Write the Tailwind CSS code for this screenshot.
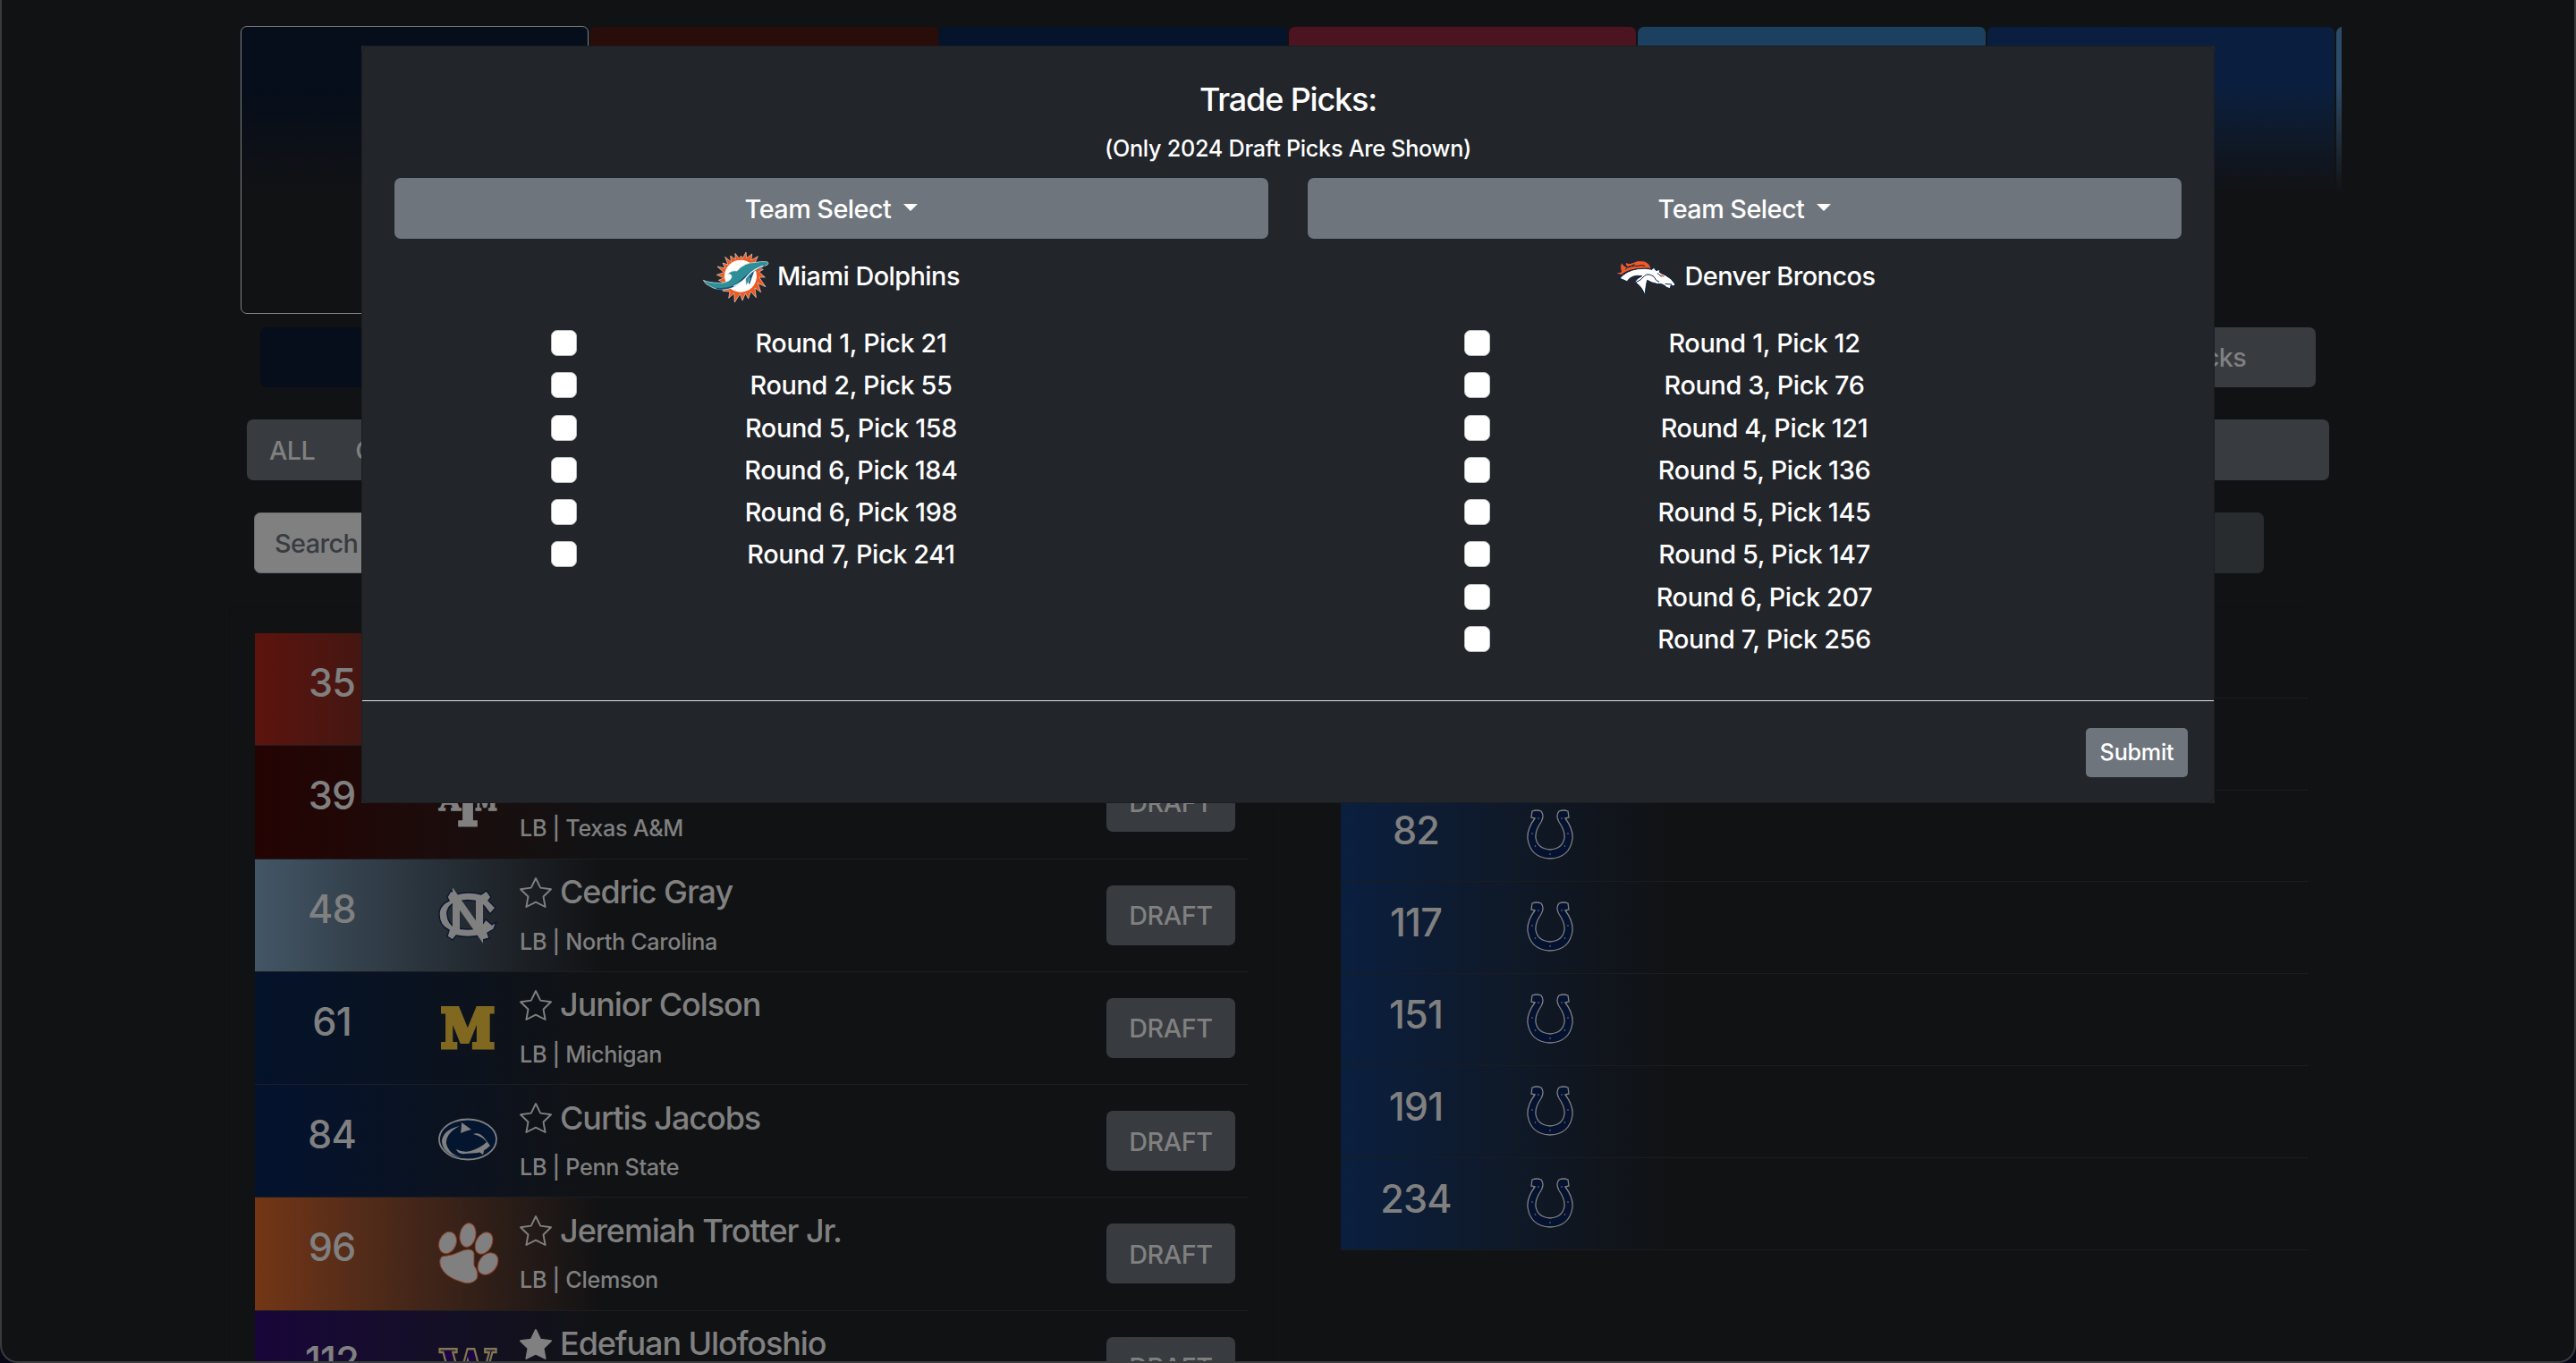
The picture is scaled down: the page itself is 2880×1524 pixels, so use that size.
<!DOCTYPE html>
<html lang="en">
<head>
<meta charset="utf-8">
<title>Mock Draft – Trade Picks</title>
<script src="https://cdn.jsdelivr.net/npm/@tailwindcss/browser@4"></script>
</head>
<body class="bg-[#070716] font-['Inter','Liberation_Sans',sans-serif] font-[450] text-[28.8px] leading-[43.2px]">
<div class="relative w-[2880px] h-[1524px] overflow-hidden">

  <!-- Draft room -->
  <main class="w-full h-full overflow-hidden rounded-b-[20px] bg-[#111214] pl-[256px] flex flex-col items-start text-[#808080]">
    <div class="mt-[29px] ml-[13px] w-[2349px] h-[322px] shrink-0 flex gap-[1.8px] overflow-hidden">
      <div class="w-[389.2px] shrink-0 rounded-[7px] border border-[#808080] bg-linear-to-b from-[#060d1b] from-[20%] to-[#111214] to-[58%]"></div>
      <div class="w-[388.6px] shrink-0 mt-px rounded-[7px] bg-linear-to-b from-[#280d0a] from-[20%] to-[#111214] to-[58%]"></div>
      <div class="w-[388.6px] shrink-0 mt-px rounded-[7px] bg-linear-to-b from-[#05132b] from-[20%] to-[#111214] to-[58%]"></div>
      <div class="w-[388.6px] shrink-0 mt-px rounded-[7px] bg-linear-to-b from-[#4c1420] from-[20%] to-[#111214] to-[58%]"></div>
      <div class="w-[388.6px] shrink-0 mt-px rounded-[7px] bg-linear-to-b from-[#1b4060] from-[20%] to-[#111214] to-[58%]"></div>
      <div class="w-[388.6px] shrink-0 mt-px rounded-[7px] bg-linear-to-b from-[#0a1f3f] from-[20%] to-[#111214] to-[58%]"></div>
      <div class="w-[388.6px] shrink-0 mt-px rounded-[7px] bg-linear-to-b from-[#2c4b69] from-[20%] to-[#111214] to-[58%]"></div>
    </div>

    <div class="mt-[15px] ml-[35px] w-[2298px] h-[67px] shrink-0 flex justify-between">
      <div class="w-[310px] rounded-[7px] bg-[#060d1b]"></div>
      <div class="w-[310px] rounded-[7px] bg-[#383b40] flex items-center justify-center tracking-[-0.02em]">Trade Picks</div>
    </div>

    <div class="mt-[36px] ml-[20px] w-[2328px] h-[68px] shrink-0 rounded-[7px] bg-[#383b3f] flex items-center pl-[25px] pt-px gap-[45px] tracking-[-0.02em]">
      <span>ALL</span><span>QB</span>
    </div>

    <div class="mt-[36px] ml-[28px] w-[2247px] h-[68px] shrink-0 flex justify-between">
      <div class="w-[1110px] rounded-[7px] border border-[#676b70] bg-[#808080] flex items-center pl-[22px] pt-px text-[#383c41] tracking-[-0.02em]">Search</div>
      <div class="w-[310px] rounded-[7px] bg-[#282c2e]"></div>
    </div>

    <div class="mt-[36px] shrink-0 flex gap-[74px] items-start">
      <section class="w-[1169px] h-[900px] rounded-t-[7px] border border-[#0f1012] pt-[30px] pl-[28px]">
        <div id="players" class="w-[1111px] flex flex-col"></div>
      </section>
      <section id="picks" class="w-[1083px] flex flex-col border-r border-t border-[#0f1012] rounded-t-[7px]"></section>
    </div>
  </main>

  <!-- Window frame -->
  <div class="absolute inset-0 rounded-b-[20px] border-2 border-t-0 border-[#3a3b3d] pointer-events-none"></div>

  <!-- Trade dialog -->
  <div role="dialog" class="absolute left-[404px] top-[51px] w-[2072px] h-[847px] bg-[#22252a] text-white">
    <div class="h-full rounded-[9px] border border-[#1b1e21] flex flex-col">
      <div class="h-[731px] px-[36px] pt-[36px] flex flex-col">
        <h1 class="h-[46px] leading-[46px] text-[36px] font-[550] text-center tracking-[-0.032em]">Trade Picks:</h1>
        <p class="mt-[13px] h-[38px] leading-[38px] text-[25.2px] text-center tracking-[-0.011em]">(Only 2024 Draft Picks Are Shown)</p>
        <div class="mt-[14px] grid grid-cols-2 gap-[44px]">
          <div>
            <button class="w-full h-[68px] rounded-[7px] bg-[#6e757c] flex items-center justify-center gap-[14px] pt-px tracking-[-0.018em]">Team Select
              <span class="border-x-[8.6px] border-t-[8.6px] border-x-transparent border-t-white -mt-[4px]"></span></button>
            <div class="mt-[14px] h-[58px] flex items-center justify-center gap-[9px]">
              <svg class="w-[74px] h-[58px]" viewBox="84 35 222 174">
                <path fill="#f05a22" stroke="#e8d9cf" stroke-width="2" d="M228 38L230 58L248 44L246 64L268 52L258 74L284 82L272 92L286 96L272 104L292 122L272 122L294 154L268 142L278 172L258 158L262 190L244 170L236 194L226 176L216 200L208 178L190 206L188 176L170 192L174 170L150 168L160 156L138 150L152 140L136 132L154 124L130 114L154 106L132 86L158 92L150 74L168 80L158 54L178 70L176 50L192 62L192 42L204 58L212 50L216 60Z"/>
                <circle cx="210" cy="118" r="54" fill="#fff"/>
                <path fill="#2f8f98" stroke="#e6eef0" stroke-width="2" d="M85 132Q102 140 136 141Q150 142 160 138Q180 132 180 118Q176 108 166 112Q178 98 198 101Q222 72 262 72Q276 68 298 70Q306 72 300 80L282 88Q252 98 244 118Q240 136 228 150Q228 134 226 126Q208 150 168 162Q128 168 104 150Q92 146 85 132Z"/>
                <path fill="none" stroke="#1b4f7c" stroke-width="5" d="M128 160Q180 166 216 130Q246 98 290 84M240 122Q250 116 252 104L238 144"/>
                <path fill="none" stroke="#fff" stroke-width="3.500" d="M186 152Q220 138 236 114Q256 94 286 84"/>
              </svg>
              <span class="-mt-[3px] tracking-[-0.018em]">Miami Dolphins</span>
            </div>
            <div id="left" class="mt-[21px] flex flex-col"></div>
          </div>
          <div>
            <button class="w-full h-[68px] rounded-[7px] bg-[#6e757c] flex items-center justify-center gap-[14px] pt-px tracking-[-0.018em]">Team Select
              <span class="border-x-[8.6px] border-t-[8.6px] border-x-transparent border-t-white -mt-[4px]"></span></button>
            <div class="mt-[14px] h-[58px] flex items-center justify-center gap-[9px]">
              <svg class="w-[70px] h-[58px]" viewBox="82 33 210 174">
                <path fill="#f15a24" stroke="#0c2347" stroke-width="3" d="M86 106L104 102Q98 82 106 68Q110 82 124 86Q116 76 120 70Q130 76 140 72Q160 60 184 66Q200 72 206 90L160 92Q124 96 106 112Q96 112 86 106Z"/>
                <path fill="none" stroke="#0c2347" stroke-width="3" d="M118 94Q130 80 160 82Q172 78 184 82M124 86Q140 84 150 76"/>
                <path fill="#fff" stroke="#0c2347" stroke-width="3" d="M100 124Q120 98 160 92Q190 88 208 94L214 88L222 98L232 94L234 104Q254 112 272 126L286 144L280 150L272 146L268 158Q256 156 250 148Q240 140 224 142Q204 138 192 130Q188 144 184 180Q174 150 150 136Q158 122 174 116Q140 110 124 134Z"/>
                <path fill="none" stroke="#0c2347" stroke-width="3" d="M152 138Q172 130 182 116Q194 104 214 118Q220 132 232 136M252 142L274 144M226 106L240 118"/>
                <path stroke="#f15a24" stroke-width="4" d="M238 112L248 118"/>
              </svg>
              <span class="-mt-[3px] tracking-[-0.018em]">Denver Broncos</span>
            </div>
            <div id="right" class="mt-[21px] flex flex-col"></div>
          </div>
        </div>
      </div>
      <div class="h-[114px] border-t border-[#dee2e6] flex justify-end pt-[30px] pr-[29px]">
        <button class="w-[114px] h-[55px] rounded-[5px] bg-[#6e757c] text-[25.2px] tracking-[-0.01em]">Submit</button>
      </div>
    </div>
  </div>
</div>

<script>
const round = t => `<label class="h-[47.25px] flex items-center">
  <span class="ml-[175px] w-[29px] h-[29px] rounded-[7px] bg-white border border-[#bfbfbf]"></span>
  <span class="ml-[106px] w-[401px] text-center tracking-[-0.012em]">${t}</span></label>`;
document.getElementById('left').innerHTML = ['Round 1, Pick 21','Round 2, Pick 55','Round 5, Pick 158','Round 6, Pick 184','Round 6, Pick 198','Round 7, Pick 241'].map(round).join('');
document.getElementById('right').innerHTML = ['Round 1, Pick 12','Round 3, Pick 76','Round 4, Pick 121','Round 5, Pick 136','Round 5, Pick 145','Round 5, Pick 147','Round 6, Pick 207','Round 7, Pick 256'].map(round).join('');

const slab = `font-family="DejaVu Serif" font-weight="700"`;
const logos = {
  none: '',
  tam: `<g ${slab} fill="#808080" stroke="#808080" stroke-width="1.5"><text x="1" y="44" font-size="32" textLength="24" lengthAdjust="spacingAndGlyphs">A</text><text x="41" y="44" font-size="32" textLength="25" lengthAdjust="spacingAndGlyphs">M</text><text x="14" y="61" font-size="72" stroke-width="3" textLength="38" lengthAdjust="spacingAndGlyphs">T</text></g>`,
  unc: `<path fill="#808080" stroke="#0a1730" stroke-width="1.4" d="M10 14L14 7L20 11Q34 7 48 11L54 7L59 14L56 18L64 26L58 33L52 25L47 20Q33 15 19 20Q9 25 10 34Q11 44 19 48Q33 52 47 48L53 39L60 45L65 42L62 50L55 54L57 60L50 62L46 57Q33 60 20 57L16 62L10 58L12 51Q1 46 1 33Q1 23 12 18Z"/><path fill="none" stroke="#808080" stroke-width="8" d="M20 53V16L46 53V16"/>`,
  mich: `<text x="3" y="56" ${slab} font-size="60" fill="#806820" stroke="#806820" stroke-width="5" textLength="60" lengthAdjust="spacingAndGlyphs">M</text>`,
  psu: `<ellipse cx="33" cy="33" rx="32" ry="22.5" fill="#04152f" stroke="#808080" stroke-width="1.8"/><path fill="#808080" d="M26 14L37 22Q32 23 25 26Q26 20 26 14ZM24 18Q8 26 9 38Q12 50 26 53Q4 50 4 34Q6 22 24 18ZM39 27Q46 24 52 32L58 40Q52 46 44 48L30 49Q22 50 20 44Q28 48 36 46Q48 42 54 36Q50 30 39 27ZM44 46L52 42L50 50Z"/>`,
  clem: `<g fill="#808080" stroke="#8a3a1c" stroke-width="1"><ellipse cx="10.500" cy="22.500" rx="9.500" ry="12.500" transform="rotate(22 10.500 22.500)"/><ellipse cx="33" cy="14" rx="9" ry="13.500" transform="rotate(10 33 14)"/><ellipse cx="51" cy="23" rx="9" ry="13" transform="rotate(28 51 23)"/><ellipse cx="55.500" cy="46" rx="10" ry="13.500" transform="rotate(38 55.500 46)"/><path d="M4 38Q16 37 28 31Q38 28 40 34L40 48Q46 56 43 63Q36 71 25 66Q8 61 3 50Q0 42 4 38Z"/></g>`,
  wash: `<text x="2" y="61" ${slab} font-size="64" fill="#1c0540" stroke="#80784f" stroke-width="2.5" textLength="62" lengthAdjust="spacingAndGlyphs">W</text>`
};
const star = fill => `<svg class="w-[38px] h-[36px]" viewBox="0 0 38 36"><path fill="${fill ? '#808080' : 'none'}" stroke="#808080" stroke-width="1.9" stroke-linejoin="round" d="M19 2L24.2 12.6L36 14.3L27.5 22.5L29.6 34L19 28.6L8.4 34L10.5 22.5L2 14.3L13.8 12.6Z"/></svg>`;
const rows = [
  ['from-[#5c130d]','35','none','',''],
  ['from-[#240303]','39','tam','','LB | Texas A&amp;M'],
  ['from-[#435666]','48','unc','Cedric Gray','LB | North Carolina'],
  ['from-[#04122a]','61','mich','Junior Colson','LB | Michigan'],
  ['from-[#04122f]','84','psu','Curtis Jacobs','LB | Penn State'],
  ['from-[#733616]','96','clem','Jeremiah Trotter Jr.','LB | Clemson'],
  ['from-[#19053a]','112','wash','Edefuan Ulofoshio','LB | Washington']
];
document.getElementById('players').innerHTML = rows.map(([c,n,l,name,sub]) => `
<div class="h-[126.3px] shrink-0 flex items-start border-b border-[#1c1e20] bg-linear-to-r ${c} to-[#111214] to-[35%]">
  <div class="w-[172px] pt-[29px] leading-[52px] text-[43.2px] font-[550] text-center tracking-[-0.02em]">${n}</div>
  <svg class="ml-[33px] mt-[28px] w-[66px] h-[66px] overflow-visible" viewBox="0 0 66 66">${logos[l]}</svg>
  <div class="ml-[24px] w-[657px] pt-[15px]">
    <div class="flex items-center gap-[8px] h-[44px] text-[36px] font-[550] tracking-[-0.03em]">${star(n === '112')}<span>${name}</span></div>
    <div class="mt-[14px] h-[38px] leading-[38px] pl-px text-[25.2px] tracking-[-0.013em]">${sub}</div>
  </div>
  <div class="mt-[29px] w-[144px] h-[67px] rounded-[7px] bg-[#383b3f] flex items-center justify-center pt-px tracking-[-0.015em]">DRAFT</div>
</div>`).join('');

const shoe = `<svg class="ml-[124px] -mt-[2px] w-[52px] h-[56px]" viewBox="0 0 52 56"><path fill="#04122f" stroke="#808080" stroke-width="1.3" d="M6 2Q11 0 16 2Q20 7 16 14Q9 24 10 32Q12 44 26 45Q40 44 42 32Q43 24 36 14Q32 7 36 2Q41 0 46 2L47 9L43 10Q52 22 51 33Q48 54 26 55Q4 54 1 33Q0 22 9 10L5 9Z"/><g fill="#808080"><circle cx="13" cy="10" r=".8"/><circle cx="39" cy="10" r=".8"/><circle cx="6" cy="27" r=".8"/><circle cx="46" cy="27" r=".8"/><circle cx="9.500" cy="41" r=".8"/><circle cx="42.500" cy="41" r=".8"/><circle cx="26" cy="50" r=".8"/></g></svg>`;
document.getElementById('picks').innerHTML = ['15','46','82','117','151','191','234'].map(n => `
<div class="h-[102.8px] shrink-0 flex items-center border-b border-[#1a1c1e] bg-linear-to-r from-[#0a1f3f] to-[#111214] to-[34%]">
  <div class="w-[84px] ml-[42px] -mt-[12px] leading-[52px] text-[43.2px] font-[550] flex justify-center tracking-[-0.02em] -mr-[42px]">${n}</div>
  ${shoe}
</div>`).join('');
</script>
</body>
</html>
